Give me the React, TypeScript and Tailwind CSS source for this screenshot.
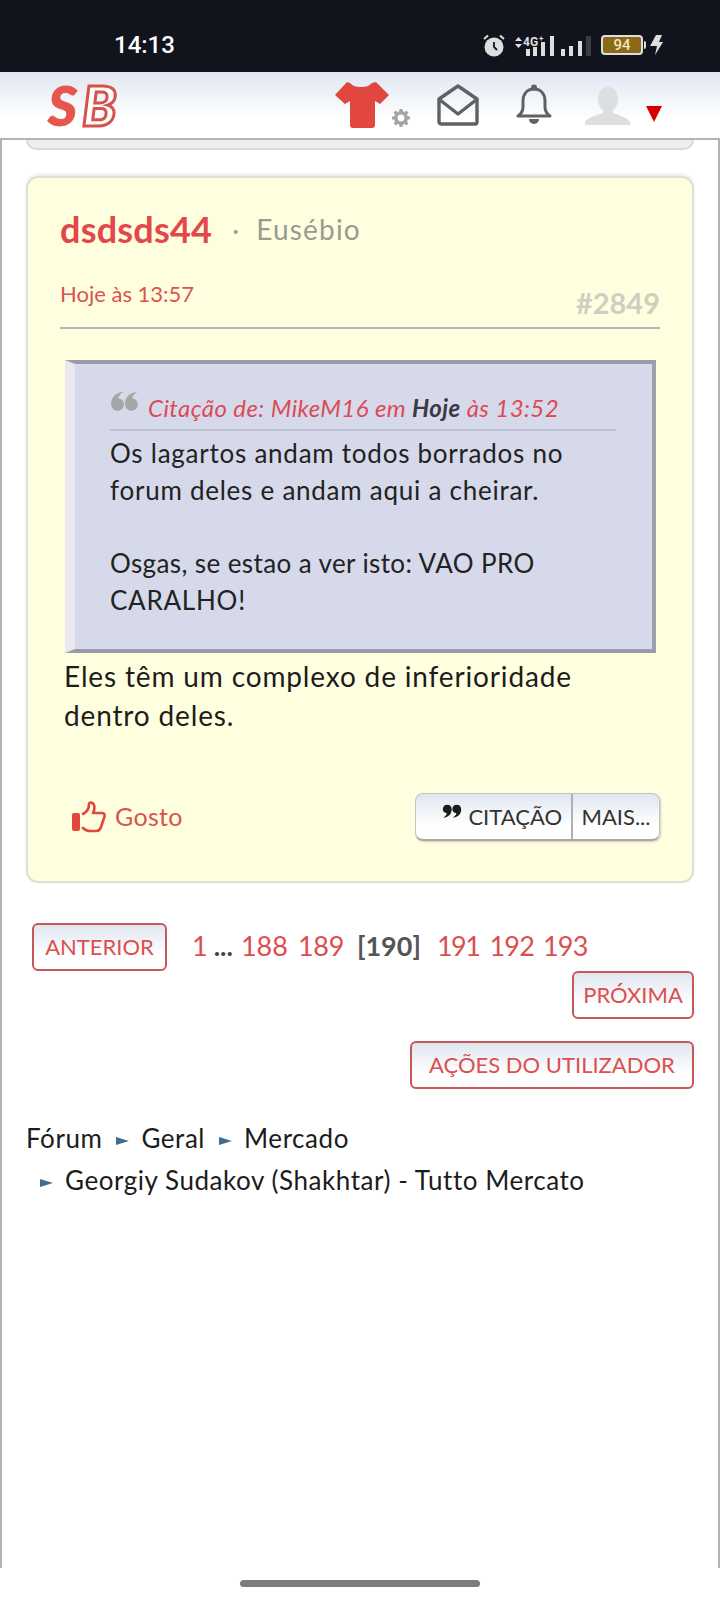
function Alarm() {
  return (
    <svg width="22" height="24" viewBox="0 0 22 24" className="mr-[9px]">
      <circle cx="11" cy="14" r="9.5" fill="#dedede" />
      <path d="M11 9v5l3 3" stroke="#11141c" strokeWidth="1.8" fill="none" />
      <path d="M1 6l4-3.5M21 6l-4-3.5" stroke="#dedede" strokeWidth="2" />
    </svg>
  );
}

function Signal4G() {
  return (
    <svg width="41" height="24" viewBox="0 0 41 24">
      <path d="M1 8l3.5-4L8 8zM1 11l3.5 4L8 11z" fill="#dedede" />
      <text x="9" y="13" fill="#dedede" fontSize="12" fontWeight="700" fontFamily="Roboto, sans-serif">4G</text>
      <text x="25" y="8" fill="#dedede" fontSize="8" fontWeight="700" fontFamily="Roboto, sans-serif">+</text>
      <rect x="12" y="16" width="4" height="7" fill="#dedede" />
      <rect x="19" y="14" width="4" height="9" fill="#dedede" />
      <rect x="27" y="9" width="4" height="14" fill="#dedede" />
      <rect x="36" y="3" width="4" height="20" fill="#dedede" />
    </svg>
  );
}

function Signal() {
  return (
    <svg width="30" height="24" viewBox="0 0 30 24">
      <rect x="0" y="16" width="4" height="7" fill="#dedede" />
      <rect x="8" y="13" width="4" height="10" fill="#dedede" />
      <rect x="17" y="8" width="4" height="15" fill="#dedede" />
      <rect x="25" y="3" width="5" height="20" fill="#3a3d44" />
    </svg>
  );
}

function Bolt() {
  return (
    <svg width="13" height="20" viewBox="0 0 13 20">
      <path d="M6 0h6L9 7h4L5 20l2-9H0z" fill="#dedede" />
    </svg>
  );
}

function StatusBar() {
  return (
    <div className="flex h-[72px] items-center bg-[#11141c] pl-[114px] pr-[57px] pt-[18px]">
      <span className="font-['Roboto'] text-[24px] font-medium leading-none text-white">14:13</span>
      <div className="ml-auto flex items-center">
        <Alarm />
        <Signal4G />
        <div className="ml-[6px]">
          <Signal />
        </div>
        <div className="ml-[10px] flex items-center">
          <div className="flex h-[20px] w-[42px] items-center justify-center rounded-[4px] border-2 border-[#dedede] bg-[#8a6a17] p-0 font-['Roboto'] text-[15px] font-medium leading-none text-[#f2e6c0]">
            94
          </div>
          <div className="ml-[1px] h-[8px] w-[2px] rounded-r bg-[#dedede]" />
        </div>
        <div className="ml-[4px]">
          <Bolt />
        </div>
      </div>
    </div>
  );
}

function Shirt() {
  return (
    <svg width="58" height="50" viewBox="0 0 58 50">
      <path
        d="M18 3c3 3 6 4 11 4s8-1 11-4l4-1 13 13-9 9-5-3v24c0 2-1 3-3 3H21c-2 0-3-1-3-3V21l-5 3-10-9L15 2z"
        fill="#e2473f"
        strokeLinejoin="round"
      />
    </svg>
  );
}

function Cog() {
  return (
    <svg width="20" height="20" viewBox="0 0 20 20" fill="none" stroke="#a4a4a4">
      <circle cx="10" cy="10" r="5.2" strokeWidth="3.6" />
      <path
        d="M10 1v3M10 16v3M1 10h3M16 10h3M3.6 3.6l2.2 2.2M14.2 14.2l2.2 2.2M3.6 16.4l2.2-2.2M14.2 5.8l2.2-2.2"
        strokeWidth="3.2"
      />
    </svg>
  );
}

function MailOpen() {
  return (
    <svg width="42" height="42" viewBox="0 0 42 42" fill="none" stroke="#5f6164" strokeWidth="3.4" strokeLinejoin="round" strokeLinecap="round">
      <path d="M2 15L21 2l19 13v23a2 2 0 0 1-2 2H4a2 2 0 0 1-2-2z" />
      <path d="M3 16l18 14 18-14" />
    </svg>
  );
}

function BellIcon() {
  return (
    <svg width="36" height="42" viewBox="0 0 36 42" fill="none">
      <circle cx="18" cy="3.5" r="3" fill="#5f6164" />
      <path
        d="M18 5c-7 0-11 5-11 12v6c0 4-2 7-5 9h32c-3-2-5-5-5-9v-6c0-7-4-12-11-12z"
        stroke="#5f6164"
        strokeWidth="3"
        strokeLinejoin="round"
      />
      <path d="M13 35h10a5 5 0 0 1-10 0z" fill="#5f6164" />
    </svg>
  );
}

function UserBlank() {
  return (
    <svg width="46" height="38" viewBox="0 0 46 38">
      <path
        d="M23 0c6 0 10 5 10 12 0 5-2 9-5 11v3c5 2 14 4 17 9 1 2 0 3-1 3H1c-1 0-1-1-1-3 3-5 12-7 18-9v-3c-3-2-5-6-5-11C13 5 17 0 23 0z"
        fill="#dddee0"
      />
    </svg>
  );
}

function Header() {
  return (
    <div className="flex h-[68px] items-center border-b-2 border-[#b5b5b5] bg-gradient-to-b from-[#e0e6f0] to-white to-70%">
      <div className="ml-[48px] flex w-[72px] items-center font-['Lato'] text-[56px] font-black italic leading-none">
        <span className="text-[#e5574c] [-webkit-text-stroke:1px_#e5574c]">S</span>
        <span className="ml-[5px] text-white [-webkit-text-stroke:3px_#d6534c]">B</span>
      </div>
      <div className="ml-[212px]">
        <Shirt />
      </div>
      <div className="ml-[1px] mt-[26px]">
        <Cog />
      </div>
      <div className="ml-[26px]">
        <MailOpen />
      </div>
      <div className="ml-[37px]">
        <BellIcon />
      </div>
      <div className="ml-[33px] mt-[2px]">
        <UserBlank />
      </div>
      <div className="ml-[15px] mt-[18px] h-0 w-0 border-x-[8px] border-t-[16px] border-x-transparent border-t-[#d40000]" />
    </div>
  );
}

function Thumb() {
  return (
    <svg width="34" height="32" viewBox="0 0 34 32" fill="none">
      <rect x="0" y="12" width="8" height="18" rx="2" fill="#e2473f" />
      <path
        d="M11 13c4-2 6-5 6-10 0-2 4-2 5 1 1 3 0 6-1 8h9c3 0 3 3 2 5l-3 9c-1 3-2 4-5 4h-6c-3 0-5-1-7-3"
        stroke="#e2473f"
        strokeWidth="2.6"
        strokeLinecap="round"
        strokeLinejoin="round"
      />
    </svg>
  );
}

const quoteMark =
  "M13 1C6 1 .5 6 .5 13c0 4 2.500 7 6.500 7s6.500-3 6.500-6.500S11 7.500 7.500 7.500C8.500 4.500 10 2.500 13 1z";

function QuoteMark({ className, size }: { className: string; size: number }) {
  return (
    <svg width={size} height={(size * 20) / 28} viewBox="0 0 28 21" className={className}>
      <path d={quoteMark} fill="currentColor" />
      <path d={quoteMark} fill="currentColor" transform="translate(14 0)" />
    </svg>
  );
}

function Quote() {
  return (
    <div className="ml-[5px] mr-[4px] mt-[31px] border-b-[4px] border-l-[10px] border-r-[4px] border-t-[4px] border-b-[#9a9aaa] border-l-[#e8e8ee] border-r-[#a0a0a8] border-t-[#9a9aaa] bg-[#d6d9ea] pb-[30px] pl-[35px] pr-[36px] pt-[24px]">
      <div className="flex h-[43px] items-start border-b-2 border-[#bfc2d2]">
        <QuoteMark size={29} className="mt-[3px] text-[#a6a6a6]" />
        <span className="ml-[9px] mt-[6px] text-[24px] italic leading-[28px] tracking-[0.4px] text-[#dc4b55]">
          Citação de: MikeM16 em <b className="text-[#3a3a44]">Hoje</b> às 13:52
        </span>
      </div>
      <p className="mt-[4px] text-[26px] leading-[36.7px] tracking-[0.75px] text-[#222]">
        Os lagartos andam todos borrados no
        <br />
        forum deles e andam aqui a cheirar.
        <br />
        <br />
        <span className="tracking-[0.4px]">Osgas, se estao a ver isto: VAO PRO</span>
        <br />
        CARALHO!
      </p>
    </div>
  );
}

function Post() {
  return (
    <div className="rounded-[12px] border-2 border-[#dedfd8] bg-[#ffffdf] px-[32px] pb-[40px] pt-[30px] shadow-[0_-2px_3px_rgba(0,0,0,0.08)]">
      <div className="flex h-[42px] items-center">
        <span className="text-[36px] font-bold leading-none tracking-[0.2px] text-[#e2474a]">dsdsds44</span>
        <span className="ml-[20px] text-[27px] leading-none text-[#a0a09a]">·</span>
        <span className="ml-[17px] text-[28px] leading-none tracking-[1.2px] text-[#9a9a94]">Eusébio</span>
      </div>
      <div className="mt-[24px] flex h-[55px] justify-between border-b-2 border-[#b8b8bc]">
        <span className="mt-[6px] text-[22px] leading-[28px] text-[#d9534f]">Hoje às 13:57</span>
        <span className="mt-[13px] text-[29px] font-bold leading-[32px] text-[#cfcfc0]">#2849</span>
      </div>
      <Quote />
      <p className="ml-[4px] mt-[4px] text-[28px] leading-[39px] tracking-[0.85px] text-[#1c1c1c]">
        Eles têm um complexo de inferioridade
        <br />
        dentro deles.
      </p>
      <div className="mt-[58px] flex items-center justify-between">
        <div className="ml-[12px] flex items-center">
          <Thumb />
          <span className="ml-[9px] text-[25px] leading-none tracking-[0.3px] text-[#d9534f]">Gosto</span>
        </div>
        <div className="flex h-[48px] rounded-[8px] border border-b-2 border-[#c4c4c4] border-b-[#a8a8a8] bg-gradient-to-b from-[#e0e6f0] to-white to-70% text-[22px] text-[#333] shadow-[1px_1px_2px_rgba(0,0,0,0.2)]">
          <div className="flex w-[157px] items-center justify-end border-r-2 border-[#b0b0b0] pr-[9px]">
            <QuoteMark size={20} className="mb-[10px] mr-[6px] rotate-180 text-[#1c1c1c]" />
            CITAÇÃO
          </div>
          <div className="flex w-[86px] items-center justify-center">MAIS...</div>
        </div>
      </div>
    </div>
  );
}

const redButton =
  "flex h-[48px] items-center justify-center rounded-[6px] border-2 border-[#c9575a] bg-gradient-to-b from-[#e0e6f0] to-white to-70% text-[22px] leading-none text-[#dc4f4f]";

function Pagination() {
  return (
    <div className="mt-[40px] flex flex-wrap items-center text-[27px] text-[#dc4f4f]">
      <div className={`${redButton} ml-[6px] w-[135px]`}>ANTERIOR</div>
      <span className="ml-[25px]">1</span>
      <span className="ml-[6px] font-bold text-[#444]">...</span>
      <span className="ml-[8px]">188</span>
      <span className="ml-[10px] tracking-[-0.3px]">189</span>
      <span className="ml-[13px] font-bold text-[#555]">[190]</span>
      <span className="ml-[16px] tracking-[-1.5px]">191</span>
      <span className="ml-[10px] tracking-[-0.8px]">192</span>
      <span className="ml-[9px] tracking-[-0.8px]">193</span>
      <div className="flex w-full justify-end">
        <div className={`${redButton} w-[122px]`}>PRÓXIMA</div>
      </div>
      <div className="mt-[22px] flex w-full justify-end">
        <div className={`${redButton} w-[284px]`}>AÇÕES DO UTILIZADOR</div>
      </div>
    </div>
  );
}

function Arrow() {
  return <span className="ml-[14px] mr-[12px] inline-block h-0 w-0 border-y-[4px] border-l-[13px] border-y-transparent border-l-[#3f6d92] align-middle" />;
}

function Breadcrumb() {
  return (
    <div className="mt-[28px] text-[26px] leading-[42px] tracking-[0.55px] text-[#1c1c1c]">
      <div>
        Fórum
        <Arrow />
        Geral
        <Arrow />
        Mercado
      </div>
      <div>
        <Arrow />
        Georgiy Sudakov (Shakhtar) - Tutto Mercato
      </div>
    </div>
  );
}

export default function App() {
  return (
    <div className="flex h-[1600px] w-[720px] flex-col overflow-hidden bg-white font-['Lato','Liberation_Sans',sans-serif]">
      <StatusBar />
      <Header />
      <div className="flex-1 border-x-2 border-[#b2b2b2] px-[24px]">
        <div className="h-[10px] rounded-b-[12px] border-x-2 border-b-2 border-[#d8d9dc] bg-[#eceef2]" />
        <div className="mt-[26px]">
          <Post />
        </div>
        <Pagination />
        <Breadcrumb />
      </div>
      <div className="flex h-[32px] justify-center bg-white pt-[12px]">
        <div className="h-[7px] w-[240px] rounded-full bg-[#7d7d7d]" />
      </div>
    </div>
  );
}
